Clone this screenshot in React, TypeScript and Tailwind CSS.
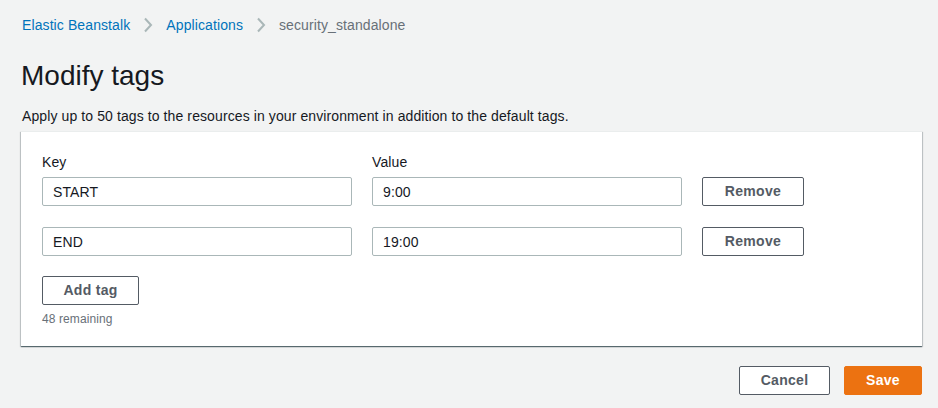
import React, { useState } from "react";

type Tag = { key: string; value: string };

function Chevron() {
  return (
    <svg width="10" height="16" viewBox="0 0 10 16" className="mx-[13px] shrink-0">
      <polyline points="2,1.5 8,8 2,14.5" fill="none" stroke="#aab7b8" strokeWidth="2" />
    </svg>
  );
}

export default function App() {
  const [tags, setTags] = useState<Tag[]>([
    { key: "START", value: "9:00" },
    { key: "END", value: "19:00" },
  ]);

  const btn =
    "h-[29px] rounded-[2px] border border-[#545b64] bg-white text-[14px] font-bold text-[#545b64] tracking-[0.3px] flex items-center justify-center";

  return (
    <div
      className="min-h-[408px] w-full bg-[#f2f3f3] pl-[21px] pr-[16px] pt-[15px] text-[#16191f] tracking-[0.1px]"
      style={{ fontFamily: '"Liberation Sans", Arial, sans-serif' }}
    >
      {/* breadcrumb */}
      <nav className="flex h-[20px] items-center pl-[1px] text-[14px] leading-[20px]">
        <a href="#" className="text-[#0073bb]">Elastic Beanstalk</a>
        <Chevron />
        <a href="#" className="text-[#0073bb]">Applications</a>
        <Chevron />
        <span className="text-[#687078]">security_standalone</span>
      </nav>

      <h1 className="mt-[23px] text-[28px] leading-[36px] font-normal tracking-normal">Modify tags</h1>
      <p className="mt-[12px] pl-[1px] text-[14px] leading-[20px]">
        Apply up to 50 tags to the resources in your environment in addition to the default tags.
      </p>

      {/* tags panel */}
      <div className="mt-[5px] bg-white px-[21px] pt-[20px] pb-[19px] shadow-[0_1px_1px_0_rgba(0,28,36,0.5),1px_1px_1px_0_rgba(0,28,36,0.15),-1px_1px_1px_0_rgba(0,28,36,0.15)] border-t border-[#eaeded]">
        <div className="flex h-[20px] text-[14px] leading-[20px]">
          <div className="w-[330px]">Key</div>
          <div>Value</div>
        </div>
        <div className="mt-[5px] flex flex-col gap-[21px]">
          {tags.map((t, i) => (
            <div key={i} className="flex items-center">
              <input
                value={t.key}
                onChange={(e) =>
                  setTags(tags.map((x, j) => (j === i ? { ...x, key: e.target.value } : x)))
                }
                className="h-[29px] w-[310px] rounded-[2px] border border-[#aab7b8] px-[10px] text-[14px] text-[#16191f] outline-none"
              />
              <input
                value={t.value}
                onChange={(e) =>
                  setTags(tags.map((x, j) => (j === i ? { ...x, value: e.target.value } : x)))
                }
                className="ml-[20px] h-[29px] w-[310px] rounded-[2px] border border-[#aab7b8] px-[10px] text-[14px] text-[#16191f] outline-none"
              />
              <button
                onClick={() => setTags(tags.filter((_, j) => j !== i))}
                className={`${btn} ml-[20px] w-[102px]`}
              >
                Remove
              </button>
            </div>
          ))}
        </div>
        <button
          onClick={() => setTags([...tags, { key: "", value: "" }])}
          className={`${btn} mt-[20px] w-[97px]`}
        >
          Add tag
        </button>
        <div className="mt-[6px] text-[12px] leading-[16px] text-[#687078]">
          {50 - tags.length} remaining
        </div>
      </div>

      {/* footer */}
      <div className="mt-[20px] flex justify-end gap-[14px]">
        <button className={`${btn} w-[91px]`}>Cancel</button>
        <button className="flex h-[29px] w-[78px] items-center justify-center rounded-[2px] border border-[#ec7211] bg-[#ec7211] text-[14px] font-bold tracking-[0.3px] text-white">
          Save
        </button>
      </div>
    </div>
  );
}
